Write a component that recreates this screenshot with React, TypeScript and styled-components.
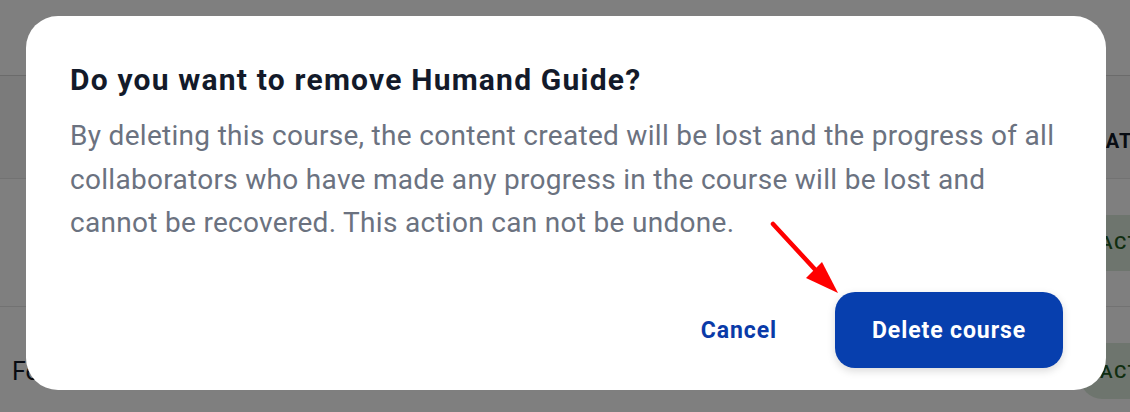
import styled, { createGlobalStyle } from "styled-components";

const GlobalStyle = createGlobalStyle`
  html, body {
    margin: 0;
    padding: 0;
    background: #ffffff;
    font-family: Roboto, "Liberation Sans", Arial, sans-serif;
  }
`;

const Page = styled.div`
  width: 1130px;
  height: 412px;
  overflow: hidden;
  background: #ffffff;
  display: flex;
  flex-direction: column;
`;

const TopBar = styled.div`
  height: 75px;
  border-bottom: 1px solid #d6d6d6;
  flex-shrink: 0;
`;

const Row = styled.div<{ $h: number; $header?: boolean }>`
  height: ${(p) => p.$h}px;
  flex-shrink: 0;
  display: flex;
  align-items: center;
  justify-content: space-between;
  border-bottom: 1px solid #e4e4e4;
  background: ${(p) => (p.$header ? "#f6f6f6" : "#ffffff")};
  padding-left: 12px;
`;

const Cell = styled.div`
  font-size: 25px;
  color: #111827;
`;

const StatusCol = styled.div<{ $w: number }>`
  width: ${(p) => p.$w}px;
  flex-shrink: 0;
  display: flex;
  align-items: center;
  white-space: nowrap;
`;

const HeadCell = styled.div`
  font-size: 20px;
  font-weight: 700;
  color: #111827;
  letter-spacing: 1px;
  padding-top: 28px;
`;

const Badge = styled.div`
  background: #dcebdc;
  color: #1f5b22;
  font-size: 19px;
  font-weight: 500;
  letter-spacing: 1.5px;
  height: 56px;
  display: flex;
  align-items: center;
  padding: 0 18px 0 20px;
  border-radius: 22px;
`;

const Overlay = styled.div`
  position: fixed;
  inset: 0;
  background: rgba(0, 0, 0, 0.5);
  display: flex;
  align-items: flex-start;
  padding: 16px 24px 0 26px;
`;

const Dialog = styled.div`
  width: 1080px;
  height: 374px;
  box-sizing: border-box;
  background: #ffffff;
  border-radius: 32px;
  padding: 46px 40px 22px 44px;
  display: flex;
  flex-direction: column;
  position: relative;
`;

const Title = styled.h2`
  margin: 0;
  font-size: 30px;
  line-height: 36px;
  font-weight: 700;
  letter-spacing: 1.2px;
  color: #131a2a;
`;

const Message = styled.p`
  margin: 16px 0 0;
  font-size: 28px;
  line-height: 43.5px;
  letter-spacing: 0.3px;
  color: #6b7280;
`;

const Actions = styled.div`
  margin-top: auto;
  margin-right: 3px;
  display: flex;
  justify-content: flex-end;
  align-items: center;
  gap: 30px;
`;

const Button = styled.button<{ $primary?: boolean }>`
  font-family: Roboto, "Liberation Sans", Arial, sans-serif;
  font-size: 23px;
  font-weight: 700;
  letter-spacing: 0.9px;
  border: none;
  cursor: pointer;
  height: 76px;
  border-radius: 20px;
  padding: 0 ${(p) => (p.$primary ? "30px" : "28px")};
  min-width: ${(p) => (p.$primary ? "228px" : "auto")};
  background: ${(p) => (p.$primary ? "#073fae" : "transparent")};
  color: ${(p) => (p.$primary ? "#ffffff" : "#0a3aa8")};
  box-shadow: ${(p) => (p.$primary ? "0 3px 8px rgba(0, 0, 0, 0.15)" : "none")};
`;

const Arrow = styled.svg`
  position: absolute;
  left: 744px;
  top: 205px;
  width: 72px;
  height: 76px;
  overflow: visible;
`;

export default function App() {
  return (
    <>
      <GlobalStyle />
      <Page>
        <TopBar />
        <Row $h={102} $header>
          <Cell />
          <StatusCol $w={50}>
            <HeadCell>STATUS</HeadCell>
          </StatusCol>
        </Row>
        <Row $h={127}>
          <Cell />
          <StatusCol $w={50}>
            <Badge>ACTIVE</Badge>
          </StatusCol>
        </Row>
        <Row $h={128}>
          <Cell>Form</Cell>
          <StatusCol $w={50}>
            <Badge>ACTIVE</Badge>
          </StatusCol>
        </Row>
      </Page>
      <Overlay>
        <Dialog>
          <Title>Do you want to remove Humand Guide?</Title>
          <Message>
            By deleting this course, the content created will be lost and the
            progress of all collaborators who have made any progress in the
            course will be lost and cannot be recovered. This action can not be
            undone.
          </Message>
          <Actions>
            <Button>Cancel</Button>
            <Button $primary>Delete course</Button>
          </Actions>
          <Arrow viewBox="0 0 72 76">
            <line
              x1="3"
              y1="3"
              x2="52"
              y2="56"
              stroke="#ff0000"
              strokeWidth="4.5"
              strokeLinecap="round"
            />
            <polygon points="68,72 52,41 36,57" fill="#ff0000" />
          </Arrow>
        </Dialog>
      </Overlay>
    </>
  );
}
